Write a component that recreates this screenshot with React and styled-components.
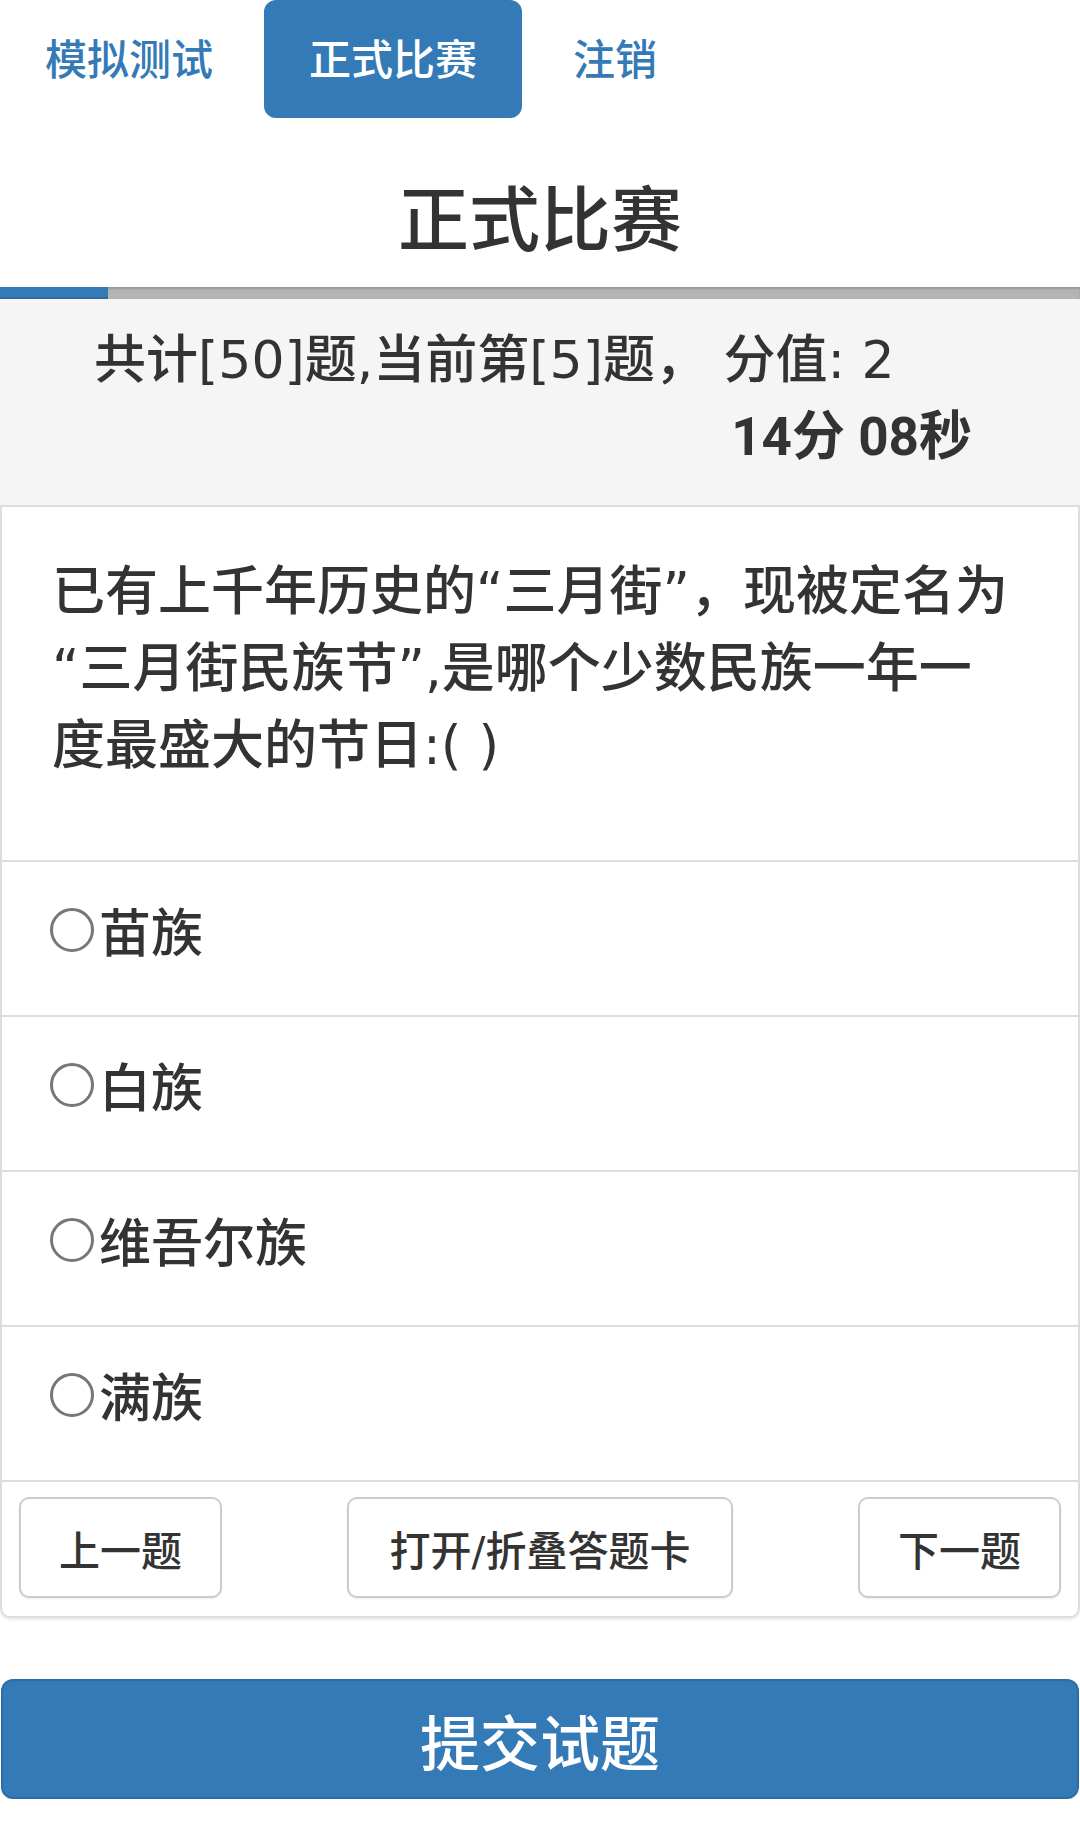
import React from "react";
import styled, { createGlobalStyle } from "styled-components";

const fontStack = `"DejaVu Sans", "Noto Sans CJK SC", sans-serif`;

const GlobalStyle = createGlobalStyle`
  html, body {
    margin: 0;
    padding: 0;
    background: #fff;
  }
  body {
    font-family: ${fontStack};
    color: #333;
  }
  * {
    box-sizing: border-box;
  }
`;

const Page = styled.div`
  width: 1080px;
  min-height: 1822px;
  display: flex;
  flex-direction: column;
`;

const Nav = styled.ul`
  display: flex;
  list-style: none;
  margin: 0;
  padding: 0;
  height: 118px;
`;

const Tab = styled.li`
  height: 118px;
  padding: 4px 45px 0;
  margin-left: ${props => (props.first ? "0" : "6px")};
  line-height: 114px;
  font-size: 42px;
  font-weight: 500;
  border-radius: 12px;
  color: ${props => (props.active ? "#fff" : "#337ab7")};
  background-color: ${props => (props.active ? "#337ab7" : "transparent")};
`;

const Title = styled.h1`
  margin: 0;
  padding: 65px 0 28px;
  text-align: center;
  font-size: 71px;
  line-height: 76px;
  font-weight: 500;
  color: #333;
`;

const Progress = styled.div`
  height: 12px;
  background-color: #b4b4b4;
  box-shadow: inset 0 2px 2px rgba(0, 0, 0, 0.15);
  display: flex;
`;

const ProgressBar = styled.div`
  height: 100%;
  background-color: #337ab7;
  box-shadow: inset 0 -2px 0 rgba(0, 0, 0, 0.12);
`;

const Info = styled.div`
  background-color: #f5f5f5;
  height: 206px;
  padding-top: 23px;
  display: flex;
  flex-direction: column;
`;

const Count = styled.div`
  padding-left: 94px;
  font-size: 52px;
  line-height: 77px;
  font-weight: 500;
  color: #333;
`;

const Timer = styled.div`
  align-self: flex-end;
  padding-right: 108px;
  font-family: Roboto, "Noto Sans CJK SC", sans-serif;
  font-size: 53px;
  line-height: 77px;
  font-weight: 700;
  color: #333;
`;

const Card = styled.div`
  border: 2px solid #ddd;
  border-radius: 0 0 10px 10px;
  box-shadow: 0 2px 3px rgba(0, 0, 0, 0.08);
  background: #fff;
`;

const Question = styled.div`
  padding: 46px 30px 76px 50px;
  font-size: 53px;
  line-height: 77px;
  font-weight: 500;
  color: #333;
  border-bottom: 2px solid #ddd;
`;

const Option = styled.label`
  display: flex;
  align-items: center;
  height: 155px;
  padding: 0 0 18px 48px;
  border-bottom: 2px solid #ddd;
  font-size: 52px;
  font-weight: 500;
  color: #333;
`;

const Radio = styled.span`
  width: 44px;
  height: 44px;
  border: 3px solid #777;
  border-radius: 50%;
  margin-right: 5px;
  flex-shrink: 0;
`;

const Controls = styled.div`
  display: flex;
  justify-content: space-between;
  padding: 15px 17px 18px;
`;

const NavButton = styled.button`
  height: 101px;
  padding: 0 ${props => (props.wide ? "41px" : "38px")};
  border: 2px solid #ccc;
  border-radius: 10px;
  background: #fff;
  box-shadow: 0 1px 2px rgba(0, 0, 0, 0.08);
  font-family: ${fontStack};
  font-size: 41px;
  font-weight: 500;
  color: #333;
`;

const Submit = styled.button`
  margin: 61px 1px 0;
  height: 120px;
  border: 2px solid #2e6da4;
  border-radius: 12px;
  background-color: #337ab7;
  color: #fff;
  font-family: ${fontStack};
  font-size: 60px;
  font-weight: 500;
`;

const options = ["苗族", "白族", "维吾尔族", "满族"];

export default function App() {
  const total = 50;
  const current = 5;

  return (
    <Page>
      <GlobalStyle />
      <Nav>
        <Tab first>模拟测试</Tab>
        <Tab active>正式比赛</Tab>
        <Tab>注销</Tab>
      </Nav>
      <Title>正式比赛</Title>
      <Progress>
        <ProgressBar style={{ width: `${(current / total) * 100}%` }} />
      </Progress>
      <Info>
        <Count>共计[{total}]题,当前第[{current}]题， 分值: 2</Count>
        <Timer>14分 08秒</Timer>
      </Info>
      <Card>
        <Question>
          已有上千年历史的“三月街”，现被定名为
          <br />
          “三月街民族节”,是哪个少数民族一年一
          <br />
          度最盛大的节日:( )
        </Question>
        {options.map(opt => (
          <Option key={opt}>
            <Radio />
            {opt}
          </Option>
        ))}
        <Controls>
          <NavButton>上一题</NavButton>
          <NavButton wide>打开/折叠答题卡</NavButton>
          <NavButton>下一题</NavButton>
        </Controls>
      </Card>
      <Submit>提交试题</Submit>
    </Page>
  );
}
